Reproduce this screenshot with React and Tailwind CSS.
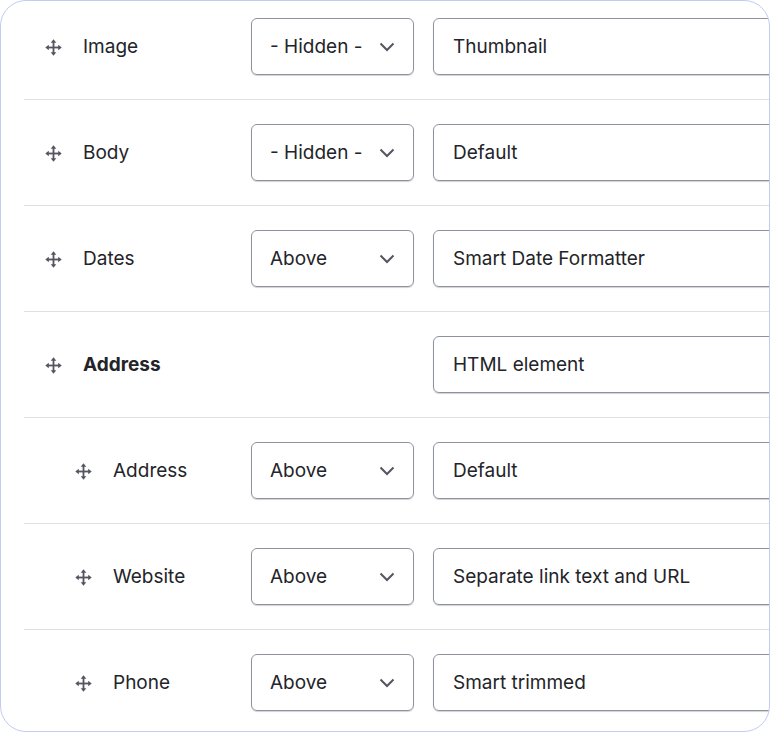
import React from "react";

const DragIcon = () => (
  <svg width="17" height="17" viewBox="0 0 17 17" className="shrink-0">
    <g fill="#545560">
      <rect x="7.6" y="3" width="1.8" height="11" />
      <rect x="3" y="7.6" width="11" height="1.8" />
      <path d="M8.5 0.3 L11.3 3.8 L5.7 3.8 Z" />
      <path d="M8.5 16.7 L11.3 13.2 L5.7 13.2 Z" />
      <path d="M0.3 8.5 L3.8 5.7 L3.8 11.3 Z" />
      <path d="M16.7 8.5 L13.2 5.7 L13.2 11.3 Z" />
    </g>
  </svg>
);

const Chevron = () => (
  <svg width="16" height="10" viewBox="0 0 16 10" className="shrink-0">
    <path d="M1.5 1.5 L8 8 L14.5 1.5" fill="none" stroke="#545560" strokeWidth="2" />
  </svg>
);

const rows = [
  { label: "Image", select: "- Hidden -", value: "Thumbnail" },
  { label: "Body", select: "- Hidden -", value: "Default" },
  { label: "Dates", select: "Above", value: "Smart Date Formatter" },
  { label: "Address", bold: true, value: "HTML element" },
  { label: "Address", nested: true, select: "Above", value: "Default" },
  { label: "Website", nested: true, select: "Above", value: "Separate link text and URL" },
  { label: "Phone", nested: true, select: "Above", value: "Smart trimmed" },
];

export default function App() {
  return (
    <div
      className="w-[770px] h-[732px] bg-white overflow-hidden rounded-[26px] border border-[#c3caf4] text-[#232429] text-[19px]"
      style={{ fontFamily: "Inter, 'Noto Sans', sans-serif" }}
    >
      <div className="pl-[23px] -mt-[7px]">
        {rows.map((r, i) => (
          <div
            key={i}
            className="flex items-center h-[106px] border-b border-[#dedfe4] w-[800px]"
          >
            <div
              className={`flex items-center w-[227px] shrink-0 gap-[21px] pt-[1px] ${
                r.nested ? "pl-[51px]" : "pl-[21px]"
              }`}
            >
              <DragIcon />
              <span className={r.bold ? "font-bold" : ""}>{r.label}</span>
            </div>
            {r.select ? (
              <div className="flex items-center justify-between w-[163px] h-[57px] shrink-0 rounded-[6px] border border-[#8e929c] shadow-[0_1px_1px_rgba(0,0,0,0.18)] pl-[18px] pr-[18px] pt-[1px]">
                <span>{r.select}</span>
                <Chevron />
              </div>
            ) : (
              <div className="w-[163px] shrink-0" />
            )}
            <div className="flex items-center ml-[19px] w-[400px] h-[57px] shrink-0 rounded-[6px] border border-[#8e929c] shadow-[0_1px_1px_rgba(0,0,0,0.18)] pl-[19px] pt-[1px]">
              <span>{r.value}</span>
            </div>
          </div>
        ))}
      </div>
    </div>
  );
}
